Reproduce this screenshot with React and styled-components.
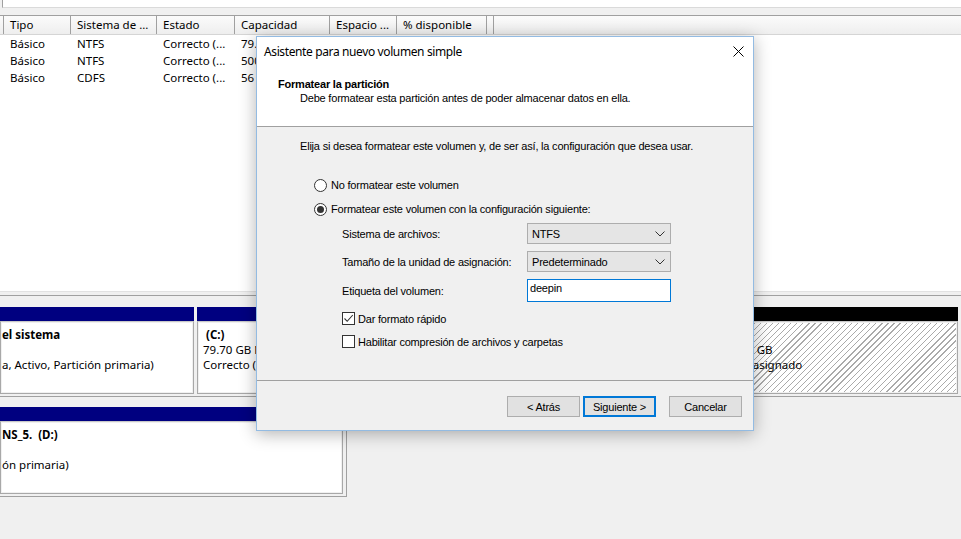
import React from "react";
import styled, { createGlobalStyle } from "styled-components";

const GlobalStyle = createGlobalStyle`
  html, body { margin: 0; padding: 0; }
  body { background: #f0f0f0; }
`;

const columns = [
  { label: "Tipo", width: 67 },
  { label: "Sistema de ...", width: 86 },
  { label: "Estado", width: 78 },
  { label: "Capacidad", width: 95 },
  { label: "Espacio ...", width: 67 },
  { label: "% disponible", width: 90 },
];

// only the columns left of the wizard are visible; the rest stay empty
const rows = [
  ["Básico", "NTFS", "Correcto (...", "79.", "", ""],
  ["Básico", "NTFS", "Correcto (...", "500", "", ""],
  ["Básico", "CDFS", "Correcto (...", "56", "", ""],
];

const App = () => {
  return (
    <Screen>
      <GlobalStyle />
      <TopStrip />
      <ListView>
        <HeaderRow>
          <HeaderStub />
          {columns.map((c) => (
            <HeaderCell key={c.label} $w={c.width}>{c.label}</HeaderCell>
          ))}
          <HeaderCell $w={2} />
        </HeaderRow>
        <ListBody>
          {rows.map((r, i) => (
            <ListRow key={i}>
              <HeaderStub $plain />
              {r.map((v, j) => (
                <ListCell key={j} $w={columns[j].width}>{v}</ListCell>
              ))}
            </ListRow>
          ))}
        </ListBody>
      </ListView>
      <Splitter />
      <DiskArea>
        <DiskRow>
          <Partition $w={194}>
            <PartBar />
            <PartBody>
              <PartText>
                <Bold>el sistema</Bold>
                <Line>&nbsp;</Line>
                <Line>a, Activo, Partición primaria)</Line>
              </PartText>
            </PartBody>
          </Partition>
          <Partition $w={529}>
            <PartBar />
            <PartBody>
              <PartText $pad={4}>
                <Bold>&nbsp;(C:)</Bold>
                <Line>79.70 GB N</Line>
                <Line>Correcto (</Line>
              </PartText>
            </PartBody>
          </Partition>
          <Partition $grow>
            <PartBar $black />
            <PartBody $hatched>
              <PartText $pad={3}>
                <Line>&nbsp;</Line>
                <Line>100 GB</Line>
                <Line>No asignado</Line>
              </PartText>
            </PartBody>
          </Partition>
        </DiskRow>
        <DiskRow $w={347}>
          <Partition $grow>
            <PartBar />
            <PartBody>
              <PartText>
                <Bold>NS_5.&nbsp;&nbsp;(D:)</Bold>
                <Line>&nbsp;</Line>
                <Line>ón primaria)</Line>
              </PartText>
            </PartBody>
          </Partition>
        </DiskRow>
      </DiskArea>

      <Dialog>
        <TitleBar>
          <TitleText>Asistente para nuevo volumen simple</TitleText>
          <CloseButton>
            <svg width="11" height="11" viewBox="0 0 11 11">
              <path d="M0.5 0.5 L10.5 10.5 M10.5 0.5 L0.5 10.5" stroke="#000" strokeWidth="1" fill="none" />
            </svg>
          </CloseButton>
        </TitleBar>
        <WizardHeader>
          <WizardTitle>Formatear la partición</WizardTitle>
          <WizardSubtitle>Debe formatear esta partición antes de poder almacenar datos en ella.</WizardSubtitle>
        </WizardHeader>
        <WizardBody>
          <Intro>Elija si desea formatear este volumen y, de ser así, la configuración que desea usar.</Intro>
          <RadioRow $top={25}>
            <Radio />
            <span>No formatear este volumen</span>
          </RadioRow>
          <RadioRow $top={10}>
            <Radio $checked />
            <span>Formatear este volumen con la configuración siguiente:</span>
          </RadioRow>
          <FieldGrid>
            <FieldLabel>Sistema de archivos:</FieldLabel>
            <Select>
              <span>NTFS</span>
              <Chevron />
            </Select>
            <FieldLabel>Tamaño de la unidad de asignación:</FieldLabel>
            <Select>
              <span>Predeterminado</span>
              <Chevron />
            </Select>
            <FieldLabel>Etiqueta del volumen:</FieldLabel>
            <TextBox>deepin</TextBox>
          </FieldGrid>
          <CheckRow $top={10}>
            <CheckBox $checked>
              <svg width="11" height="11" viewBox="0 0 11 11">
                <path d="M1.5 5.5 L4.2 8.3 L9.8 2" stroke="#333" strokeWidth="1.1" fill="none" />
              </svg>
            </CheckBox>
            <span>Dar formato rápido</span>
          </CheckRow>
          <CheckRow $top={10}>
            <CheckBox />
            <span>Habilitar compresión de archivos y carpetas</span>
          </CheckRow>
        </WizardBody>
        <Footer>
          <Button>&lt; Atrás</Button>
          <Button $default>Siguiente &gt;</Button>
          <Button $gap>Cancelar</Button>
        </Footer>
      </Dialog>
    </Screen>
  );
};

const Chevron = () => (
  <svg width="10" height="6" viewBox="0 0 10 6">
    <path d="M0.5 0.5 L5 5 L9.5 0.5" stroke="#333" strokeWidth="1" fill="none" />
  </svg>
);

const Screen = styled.div`
  position: relative;
  width: 961px;
  height: 539px;
  overflow: hidden;
  background: #f0f0f0;
  font-family: "Noto Sans", "Segoe UI", sans-serif;
  font-size: 11.5px;
  color: #000;
`;

const TopStrip = styled.div`
  height: 7px;
  background: #fff;
  border-bottom: 1px solid #dadada;
  border-left: 1px solid #a0a0a0;
  margin-left: 2px;
`;

const ListView = styled.div`
  margin-top: 7px;
  border-top: 1px solid #a0a0a0;
`;

const HeaderRow = styled.div`
  display: flex;
  height: 18px;
  background: linear-gradient(#fbfbfb, #eeeeee);
  border-bottom: 1px solid #d5d5d5;
`;

const HeaderStub = styled.div`
  width: 3px;
  flex: none;
  border-right: 1px solid ${(p) => (p.$plain ? "transparent" : "#a0a0a0")};
`;

const HeaderCell = styled.div`
  width: ${(p) => p.$w}px;
  flex: none;
  box-sizing: border-box;
  padding-left: 6px;
  line-height: 18px;
  white-space: nowrap;
  overflow: hidden;
  border-right: 1px solid #a0a0a0;
`;

const ListBody = styled.div`
  height: 256px;
  background: #fff;
  box-sizing: border-box;
`;

const ListRow = styled.div`
  display: flex;
  height: 17px;
  align-items: center;
`;

const ListCell = styled.div`
  width: ${(p) => p.$w}px;
  flex: none;
  box-sizing: border-box;
  padding-left: 6px;
  white-space: nowrap;
  overflow: hidden;
`;

const Splitter = styled.div`
  height: 3px;
  border-top: 1px solid #e2e2e2;
  border-bottom: 1px solid #a0a0a0;
`;

const DiskArea = styled.div`
  display: flex;
  flex-direction: column;
  gap: 10px;
  padding-top: 11px;
`;

const DiskRow = styled.div`
  display: flex;
  gap: 3px;
  height: 90px;
  width: ${(p) => (p.$w ? `${p.$w}px` : "auto")};
  box-sizing: border-box;
  padding: 0 3px 2px 0;
  border-bottom: 1px solid #a0a0a0;
  border-right: ${(p) => (p.$w ? "1px solid #a0a0a0" : "none")};
`;

const Partition = styled.div`
  display: flex;
  flex-direction: column;
  width: ${(p) => (p.$w ? `${p.$w}px` : "auto")};
  flex: ${(p) => (p.$grow ? "1" : "none")};
  min-width: 0;
`;

const PartBar = styled.div`
  height: 14px;
  flex: none;
  background: ${(p) => (p.$black ? "#000" : "#000080")};
`;

const PartBody = styled.div`
  flex: 1;
  min-height: 0;
  border: 1px solid #a8a8a8;
  border-top-color: #c8c8c8;
  padding: 1px;
  background: #f0f0f0;
  display: flex;
  overflow: hidden;
  & > div {
    background: ${(p) =>
      p.$hatched
        ? "repeating-linear-gradient(135deg, #fff 0px, #fff 3.4px, #aaaaaa 3.4px, #aaaaaa 4.3px)"
        : "#fff"};
  }
`;

const PartText = styled.div`
  flex: 1;
  padding: 4px 0 0 ${(p) => p.$pad || 0}px;
  white-space: nowrap;
  overflow: hidden;
`;

const Line = styled.div`
  line-height: 15px;
`;

const Bold = styled(Line)`
  font-weight: bold;
`;

/* dialog */

const Dialog = styled.div`
  position: absolute;
  left: 256px;
  top: 36px;
  width: 498px;
  height: 395px;
  box-sizing: border-box;
  border: 1px solid #93bbe2;
  background: #f0f0f0;
  box-shadow: 0 3px 16px rgba(0, 0, 0, 0.3);
  display: flex;
  flex-direction: column;
  font-family: "Liberation Sans", Arial, sans-serif;
  font-size: 11px;
  letter-spacing: -0.2px;
`;

const TitleBar = styled.div`
  height: 28px;
  flex: none;
  background: #fff;
  display: flex;
  align-items: center;
  justify-content: space-between;
  padding: 0 9px 0 7px;
`;

const TitleText = styled.div`
  font-family: "Noto Sans", "Segoe UI", sans-serif;
  font-size: 12px;
  letter-spacing: -0.38px;
`;

const CloseButton = styled.div`
  display: flex;
  align-items: center;
  padding-top: 1px;
`;

const WizardHeader = styled.div`
  height: 62px;
  flex: none;
  box-sizing: border-box;
  background: #fff;
  padding: 12px 0 0 21px;
  border-bottom: 1px solid #a0a0a0;
`;

const WizardTitle = styled.div`
  font-weight: bold;
  line-height: 14px;
`;

const WizardSubtitle = styled.div`
  line-height: 14px;
  padding-left: 22px;
`;

const WizardBody = styled.div`
  height: 254px;
  flex: none;
  box-sizing: border-box;
  padding: 12px 0 0 43px;
  border-bottom: 1px solid #a0a0a0;
`;

const Intro = styled.div`
  line-height: 14px;
`;

const RadioRow = styled.div`
  display: flex;
  align-items: center;
  gap: 4px;
  height: 14px;
  margin: ${(p) => p.$top}px 0 0 14px;
`;

const Radio = styled.div`
  width: 13px;
  height: 13px;
  box-sizing: border-box;
  border-radius: 50%;
  border: 1px solid #333;
  background: #fff;
  display: flex;
  align-items: center;
  justify-content: center;
  &::after {
    content: "";
    display: ${(p) => (p.$checked ? "block" : "none")};
    width: 7px;
    height: 7px;
    border-radius: 50%;
    background: #333;
  }
`;

const FieldGrid = styled.div`
  display: grid;
  grid-template-columns: 185px 144px;
  grid-template-rows: 21px 21px 23px;
  row-gap: 7px;
  align-items: center;
  margin: 7px 0 0 42px;
`;

const FieldLabel = styled.div`
  line-height: 14px;
`;

const Select = styled.div`
  height: 21px;
  box-sizing: border-box;
  border: 1px solid #adadad;
  background: #e5e5e5;
  display: flex;
  align-items: center;
  justify-content: space-between;
  padding: 0 5px 0 4px;
`;

const TextBox = styled.div`
  height: 23px;
  box-sizing: border-box;
  border: 1px solid #0078d7;
  background: #fff;
  padding: 2px 0 0 2px;
`;

const CheckRow = styled.div`
  display: flex;
  align-items: center;
  gap: 3px;
  height: 13px;
  margin: ${(p) => p.$top}px 0 0 42px;
`;

const CheckBox = styled.div`
  width: 13px;
  height: 13px;
  box-sizing: border-box;
  border: 1px solid #333;
  background: #fff;
  display: flex;
  align-items: center;
  justify-content: center;
`;

const Footer = styled.div`
  flex: 1;
  display: flex;
  align-items: flex-start;
  justify-content: flex-end;
  padding: 15px 11px 0 0;
  gap: 3px;
`;

const Button = styled.div`
  width: 73px;
  height: 21px;
  box-sizing: border-box;
  margin-left: ${(p) => (p.$gap ? "10px" : "0")};
  background: #e1e1e1;
  border: ${(p) => (p.$default ? "2px solid #0078d7" : "1px solid #adadad")};
  display: flex;
  align-items: center;
  justify-content: center;
`;

export default App;
